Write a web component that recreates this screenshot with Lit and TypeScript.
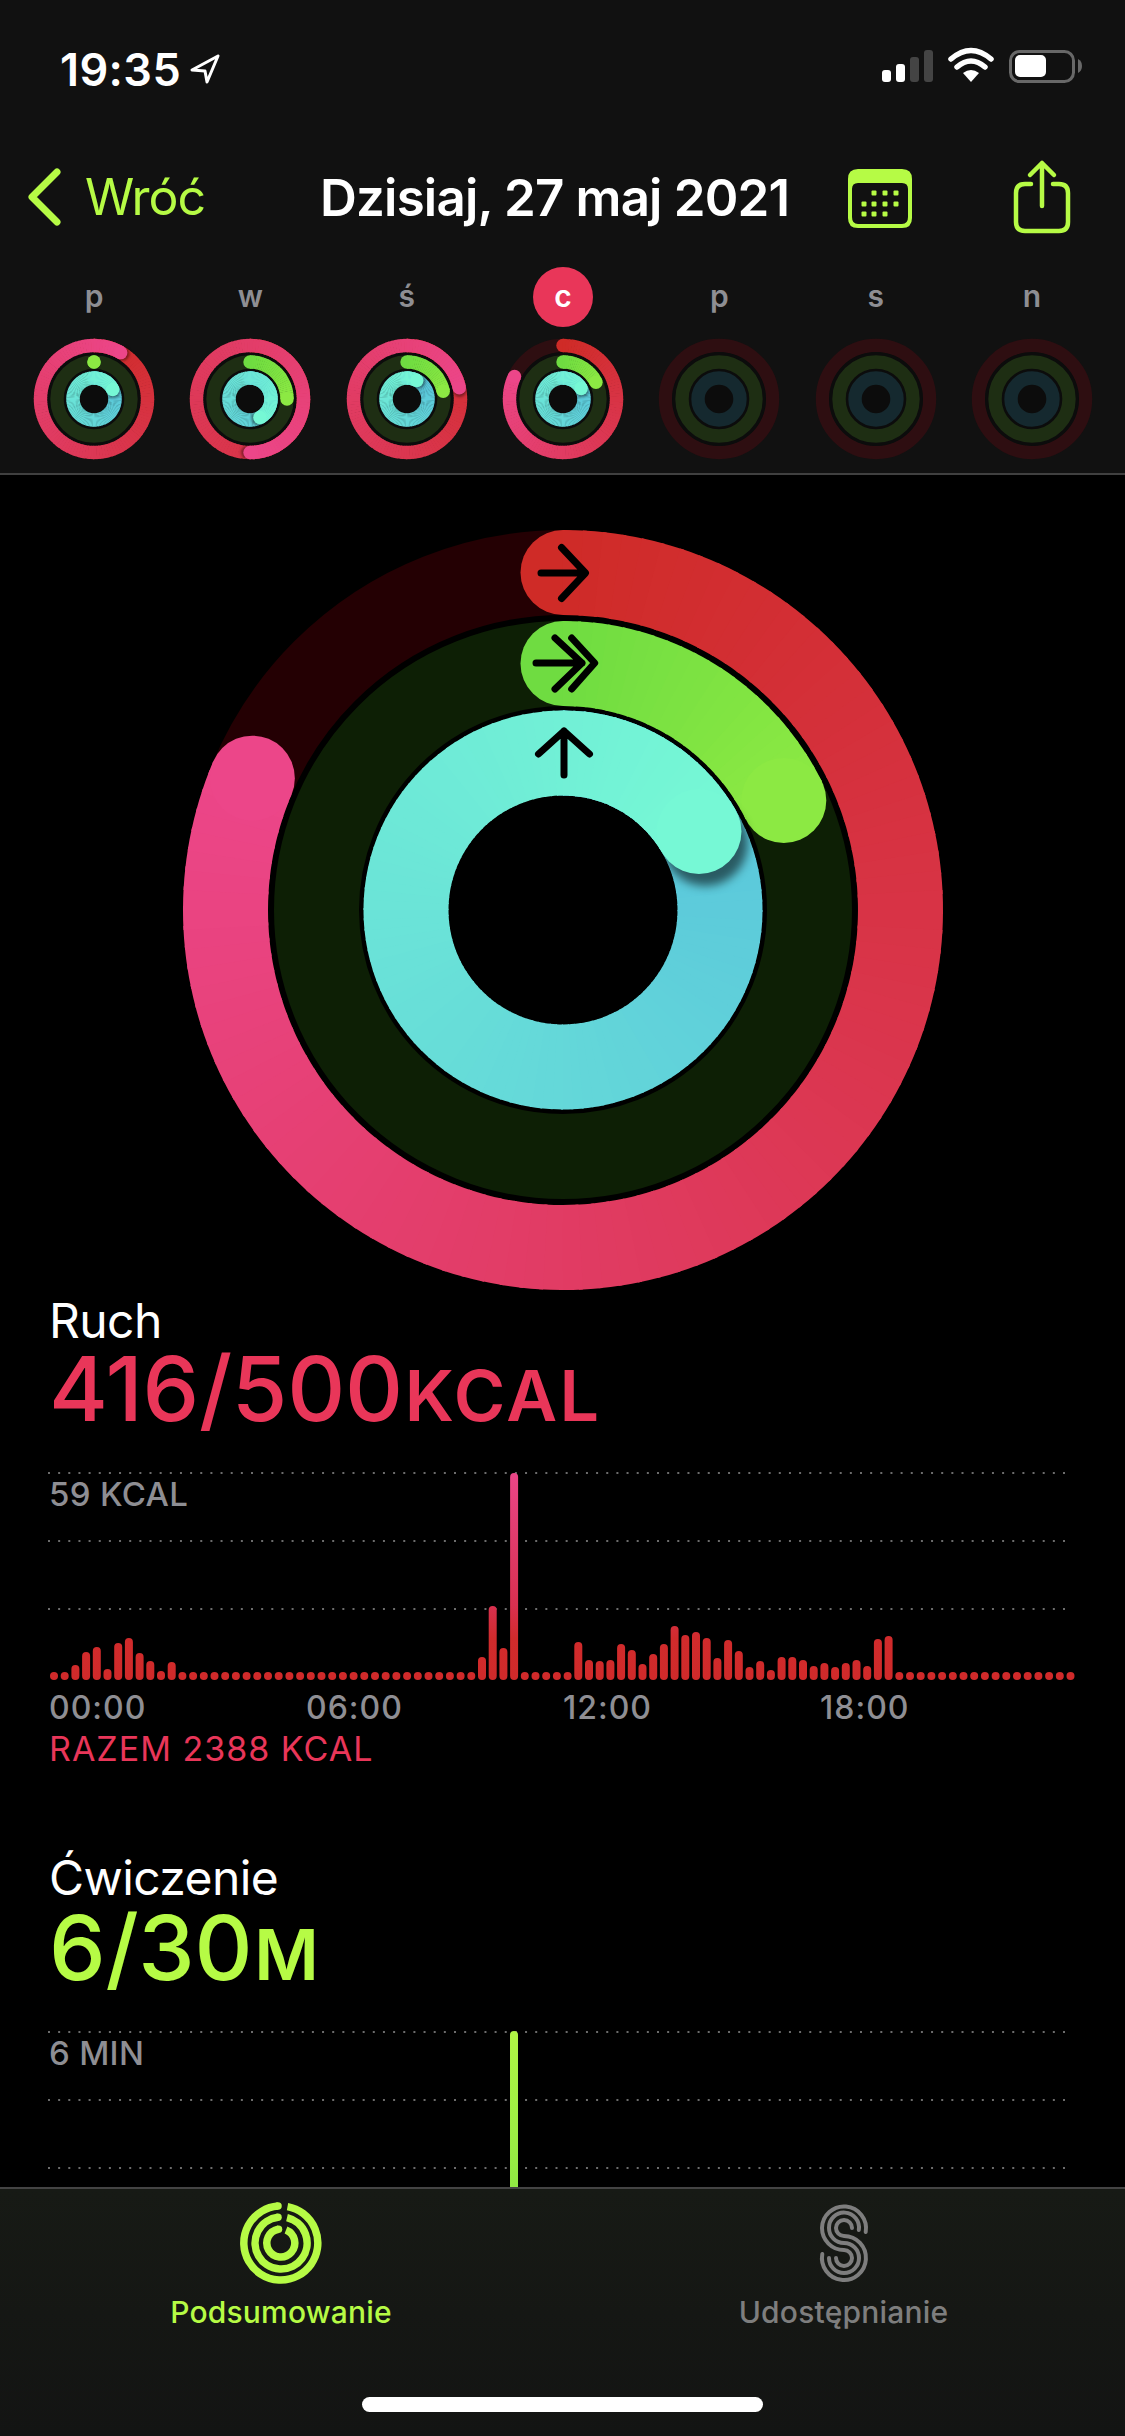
import { LitElement, html, css, svg } from "lit";
import { customElement } from "lit/decorators.js";

type RGB = [number, number, number];
const RED: [RGB, RGB] = [[207, 43, 39], [236, 70, 137]];
const GREEN: [RGB, RGB] = [[111, 220, 65], [140, 233, 67]];
const BLUE: [RGB, RGB] = [[86, 191, 220], [118, 248, 213]];

const mix = (c: [RGB, RGB], t: number) => {
  const k = Math.max(0, Math.min(1, t));
  const v = c[0].map((a, i) => Math.round(a + (c[1][i] - a) * k));
  return `rgb(${v[0]},${v[1]},${v[2]})`;
};

function polar(cx: number, cy: number, r: number, deg: number) {
  const a = (deg * Math.PI) / 180;
  return [cx + r * Math.sin(a), cy - r * Math.cos(a)];
}

function arc(cx: number, cy: number, r: number, w: number, sweep: number, colors: [RGB, RGB], shadowClass: string) {
  const [sx, sy] = polar(cx, cy, r, 0);
  const [ex, ey] = polar(cx, cy, r, sweep);
  const step = 3;
  const parts: unknown[] = [];
  const count = Math.ceil(sweep / step);
  const shadowFrom = Math.max(0, count - 10);
  parts.push(svg`<circle cx=${sx} cy=${sy} r=${w / 2} fill=${mix(colors, 0)}></circle>`);
  for (let i = 0; i < count; i++) {
    if (i === shadowFrom && sweep > 360) {
      const off = ((w * 0.16) / r) * (180 / Math.PI);
      const [hx, hy] = polar(cx, cy, r, sweep + off);
      parts.push(svg`<circle class=${shadowClass} cx=${hx} cy=${hy} r=${w / 2}></circle>`);
    }
    const a0 = i * step;
    const a1 = Math.min(sweep, a0 + step + 0.6);
    const [x0, y0] = polar(cx, cy, r, a0);
    const [x1, y1] = polar(cx, cy, r, a1);
    parts.push(svg`<path d="M${x0} ${y0}A${r} ${r} 0 0 1 ${x1} ${y1}" fill="none" stroke-width=${w} stroke=${mix(colors, (a0 + step / 2) / sweep)}></path>`);
  }
  parts.push(svg`<circle cx=${ex} cy=${ey} r=${w / 2} fill=${mix(colors, 1)}></circle>`);
  return parts;
}

const dots = (n: number) => Array.from({ length: n }, () => 8);
const MOVE_BARS = [
  8, 8, 15, 28, 33, 11, 37, 42, 27, 19, 9, 18, ...dots(28), 23, 74, 32, 207, ...dots(5),
  38, 20, 19, 20, 36, 30, 16, 26, 36, 54, 45, 48, 42, 22, 40, 29, 13, 19, 10, 23, 23, 20, 14, 17, 13, 17, 20, 14, 41, 44,
  ...dots(17),
];

const DAYS = [
  { l: "p", r: 390, g: 0, b: 423 },
  { l: "w", r: 540, g: 90, b: 512 },
  { l: "ś", r: 438, g: 78, b: 388 },
  { l: "c", r: 295, g: 63, b: 420, today: true },
  { l: "p" },
  { l: "s" },
  { l: "n" },
];

function chart(bars: number[] | null, id: string, stops: [number, string][]) {
  const gridYs = [1, 69, 137];
  const xs = (i: number) => 54 + i * 10.7;
  return html`<svg class="plot" width="1125" height="208" viewBox="0 0 1125 208">
    <defs>
      <linearGradient id=${id} gradientUnits="userSpaceOnUse" x1="0" y1="0" x2="0" y2="208">
        ${stops.map(([o, c]) => svg`<stop offset=${o} stop-color=${c}></stop>`)}
      </linearGradient>
    </defs>
    ${gridYs.map(
      (y) => svg`<line x1="48" x2="1072" y1=${y} y2=${y} stroke="#6c6c6c" stroke-width="2" stroke-dasharray="2 8.15"></line>`
    )}
    ${bars
      ? bars.map((h, i) => svg`<rect x=${xs(i) - 4} y=${208 - h} width="8" height=${h} rx="4" fill=${`url(#${id})`}></rect>`)
      : svg`<rect x="510" y="0" width="8" height="208" rx="4" fill=${`url(#${id})`}></rect>`}
  </svg>`;
}

@customElement("app-root")
export class AppRoot extends LitElement {
  static styles = css`
    :host {
      display: flex;
      flex-direction: column;
      width: 1125px;
      height: 2436px;
      overflow: hidden;
      background: #000;
      color: #fff;
      font-family: Inter, "Liberation Sans", sans-serif;
    }
    .head { background: #111; border-bottom: 2px solid #404040; height: 473px; flex: none; }
    .status { height: 138px; display: flex; align-items: center; justify-content: space-between; padding-left: 60px; }
    .clock { display: flex; align-items: center; gap: 8px; font-size: 45px; font-weight: 600; letter-spacing: 0.4px; }
    .status svg { display: block; }
    .nav { height: 118px; display: flex; align-items: center; padding-left: 27px; }
    .back { width: 293px; display: flex; align-items: center; gap: 24px; color: #b6fb45; font-size: 50px; font-weight: 400; letter-spacing: -1px; }
    .title { font-size: 51px; font-weight: 600; letter-spacing: -0.8px; white-space: nowrap; }
    .nav-icons { margin-left: auto; display: flex; }
    .days { display: grid; grid-template-columns: repeat(7, 156.3px); padding: 11px 0 0 16px; }
    .day { display: flex; flex-direction: column; align-items: center; gap: 10px; }
    .letter { width: 60px; height: 60px; border-radius: 50%; display: flex; align-items: center; justify-content: center; font-size: 30px; font-weight: 600; color: #8e8e93; padding-bottom: 2px; box-sizing: border-box; }
    .letter.today { background: #e93659; color: #fff; }
    .day svg { display: block; }
    .shadow-big { fill: rgba(0, 0, 0, 0.55); filter: blur(5px); }
    .shadow-small { fill: rgba(0, 0, 0, 0.45); filter: blur(1.5px); }
    main { flex: 1; min-height: 0; overflow: hidden; }
    .hero { display: block; margin: 50px auto 0; }
    .stat { display: flex; flex-direction: column; }
    .stat.second { margin-top: 86px; }
    .label { padding-left: 49px; font-size: 48px; line-height: 48px; letter-spacing: -0.6px; height: 48px; margin-top: 2px; }
    .second .label { margin-top: 0; }
    .value { padding-left: 49px; font-size: 90px; line-height: 80px; height: 80px; font-weight: 500; letter-spacing: -0.3px; display: flex; align-items: baseline; margin: 4px 0 43px; }
    .second .value { margin-top: 6px; }
    .value small { font-size: 70px; font-weight: 600; letter-spacing: 2.5px; margin-left: 2px; }
    .move { color: #e93659; }
    .exercise { color: #b6fb45; }
    .chart { position: relative; height: 208px; }
    .plot { display: block; }
    .peak { position: absolute; left: 49px; top: 3px; font-size: 33px; line-height: 38px; color: #8e8e93; font-weight: 500; letter-spacing: 0.3px; }
    .times { display: grid; grid-template-columns: repeat(4, 257px); padding: 9px 0 0 49px; font-size: 32px; line-height: 38px; color: #8e8e93; font-weight: 500; letter-spacing: 1px; }
    .total { padding: 3px 0 0 49px; font-size: 34px; line-height: 38px; color: #e93659; letter-spacing: 1px; }
    .tabbar { flex: none; height: 249px; box-sizing: border-box; border-top: 2px solid #444; background: linear-gradient(#171a15, #131413); display: flex; flex-direction: column; padding-top: 9px; }
    .tabs { display: grid; grid-template-columns: 562px 1fr; }
    .tab { display: flex; flex-direction: column; align-items: center; gap: 6px; font-size: 30px; line-height: 36px; font-weight: 500; letter-spacing: 0.2px; color: #7e7e7e; }
    .tab.on { color: #b6fb45; }
    .tab svg { display: block; }
    .indicator { align-self: center; width: 401px; height: 15px; border-radius: 8px; background: #fff; margin-top: 67px; }
  `;

  private smallRing(d: { r?: number; g?: number; b?: number }) {
    const c = 62;
    return html`<svg width="124" height="124" viewBox="0 0 124 124">
      <circle cx=${c} cy=${c} r="53.5" fill="none" stroke="#2e0e11" stroke-width="13.4"></circle>
      <circle cx=${c} cy=${c} r="47" fill="#0c0c0c"></circle>
      <circle cx=${c} cy=${c} r="37" fill="none" stroke="#1e2e13" stroke-width="13.4"></circle>
      <circle cx=${c} cy=${c} r="21" fill="none" stroke="#15292f" stroke-width="13.4"></circle>
      ${d.r !== undefined ? arc(c, c, 53.5, 13.4, d.r, RED, "shadow-small") : ""}
      ${d.g !== undefined ? arc(c, c, 37, 13.4, d.g, GREEN, "shadow-small") : ""}
      ${d.b !== undefined ? arc(c, c, 21, 13.4, d.b, BLUE, "shadow-small") : ""}
    </svg>`;
  }

  private heroRings() {
    const c = 385;
    return html`<svg class="hero" width="770" height="770" viewBox="0 0 770 770">
      <circle cx=${c} cy=${c} r="337.5" fill="none" stroke="#240003" stroke-width="85"></circle>
      <circle cx=${c} cy=${c} r="246.5" fill="none" stroke="#0d1f05" stroke-width="85"></circle>
      ${arc(c, c, 337.5, 85, 293, RED, "shadow-big")}
      ${arc(c, c, 246.5, 85, 63.6, GREEN, "shadow-big")}
      ${arc(c, c, 157, 85, 420, BLUE, "shadow-big")}
      <g transform="translate(-177 -525)" fill="none" stroke="#000" stroke-width="7" stroke-linecap="round" stroke-linejoin="round">
        <path d="M540 573H584M560.5 547.5L584.5 573L560.5 598.5"></path>
        <path d="M535 663H581M554 638L581 663L554 689M570.7 638L593.7 663L570.7 689"></path>
        <path d="M563 775V731M537.5 754L563 731L588.5 754"></path>
      </g>
    </svg>`;
  }

  render() {
    const lime = "#b6fb45";
    return html`
      <div class="head">
        <div class="status">
          <div class="clock">
            <span>19:35</span>
            <svg width="32" height="32" viewBox="0 0 32 32"><path d="M29 3L3 17L16 18L18 29Z" fill="none" stroke="#fff" stroke-width="3" stroke-linejoin="round"></path></svg>
          </div>
          <svg width="245" height="44" viewBox="880 50 245 44">
            <rect x="882" y="73" width="9" height="12" rx="3" fill="#fff"></rect>
            <rect x="896" y="67" width="9" height="18" rx="3" fill="#fff"></rect>
            <rect x="910" y="60" width="9" height="25" rx="3" fill="#444"></rect>
            <rect x="924" y="53" width="9" height="32" rx="3" fill="#444"></rect>
            <path d="M971 85L963 76Q971 70 979 76Z" fill="#fff"></path>
            <path d="M957 70Q971 58 985 70" fill="none" stroke="#fff" stroke-width="5.5" stroke-linecap="round"></path>
            <path d="M951 62Q971 45 991 62" fill="none" stroke="#fff" stroke-width="5.5" stroke-linecap="round"></path>
            <rect x="1010.5" y="54.5" width="63" height="30" rx="9" fill="none" stroke="#686868" stroke-width="3"></rect>
            <rect x="1015" y="58" width="31" height="22" rx="5" fill="#fff"></rect>
            <path d="M1078 62Q1082 64 1082 69Q1082 74 1078 76Z" fill="#686868"></path>
          </svg>
        </div>
        <div class="nav">
          <div class="back">
            <svg width="34" height="58" viewBox="0 0 34 58"><path d="M30 4L5 29L30 54" fill="none" stroke=${lime} stroke-width="7" stroke-linecap="round" stroke-linejoin="round"></path></svg>
            <span>Wróć</span>
          </div>
          <div class="title">Dzisiaj, 27 maj 2021</div>
          <div class="nav-icons">
            <svg width="295" height="80" viewBox="830 156 295 80">
              <path fill-rule="evenodd" fill=${lime} d="M858 168H902Q912 168 912 178V217Q912 227 902 227H858Q848 227 848 217V178Q848 168 858 168ZM858 182Q852 182 852 188V216Q852 223 858 223H902Q908 223 908 216V188Q908 182 902 182Z"></path>
              ${[
                [874, 192], [885, 192], [896, 192],
                [864, 203], [874, 203], [885, 203], [896, 203],
                [864, 213], [874, 213], [885, 213],
              ].map(([x, y]) => svg`<rect x=${x - 2.5} y=${y - 2.5} width="5" height="5" rx="1" fill=${lime}></rect>`)}
              <g fill="none" stroke=${lime} stroke-width="4.5" stroke-linecap="round" stroke-linejoin="round">
                <path d="M1031 183H1025Q1016 183 1016 192V221Q1016 230 1025 230H1059Q1068 230 1068 221V192Q1068 183 1059 183H1053"></path>
                <path d="M1042 205V162M1030 174L1042 162L1054 174"></path>
              </g>
            </svg>
          </div>
        </div>
        <div class="days">
          ${DAYS.map(
            (d) => html`<div class="day">
              <div class="letter ${d.today ? "today" : ""}">${d.l}</div>
              ${this.smallRing(d)}
            </div>`
          )}
        </div>
      </div>
      <main>
        ${this.heroRings()}
        <section class="stat">
          <div class="label">Ruch</div>
          <div class="value move">416/500<small>KCAL</small></div>
          <div class="chart">
            ${chart(MOVE_BARS, "mv", [[0, "#ea4688"], [0.64, "#d93050"], [0.8, "#d12b2c"], [1, "#d02a2a"]])}
            <div class="peak">59 KCAL</div>
          </div>
          <div class="times"><span>00:00</span><span>06:00</span><span>12:00</span><span>18:00</span></div>
          <div class="total">RAZEM 2388 KCAL</div>
        </section>
        <section class="stat second">
          <div class="label">Ćwiczenie</div>
          <div class="value exercise">6/30<small>M</small></div>
          <div class="chart">
            ${chart(null, "ex", [[0, "#b0f545"], [0.55, "#9aee44"], [1, "#84e042"]])}
            <div class="peak">6 MIN</div>
          </div>
        </section>
      </main>
      <footer class="tabbar">
        <div class="tabs">
          <div class="tab on">
            <svg width="90" height="90" viewBox="0 0 90 90" fill="none" stroke=${lime} stroke-width="7.5">
              <path d="M51.5 8.6A37 37 0 1 1 42 8.1"></path>
              <path d="M51 19.7A26 26 0 1 1 42 19.2"></path>
              <path d="M50 32A14 14 0 1 1 42.5 31.2"></path>
              <circle cx="42" cy="8.1" r="3.75" fill=${lime} stroke="none"></circle>
              <circle cx="42" cy="19.2" r="3.75" fill=${lime} stroke="none"></circle>
              <circle cx="42.5" cy="31.2" r="3.75" fill=${lime} stroke="none"></circle>
            </svg>
            <span>Podsumowanie</span>
          </div>
          <div class="tab">
            <svg width="90" height="90" viewBox="9 9 90 90" fill="none" stroke="#7e7e7e" stroke-width="4" stroke-linecap="round">
              <path d="M75.7 43A22 22 0 1 0 32 39A22 22 0 0 0 54 61A8 8 0 1 1 46 69"></path>
              <path d="M68.8 41A15 15 0 1 0 39 39A15 15 0 0 0 54 54A15 15 0 1 1 39 69"></path>
              <path d="M62 39A8 8 0 1 0 46 39A8 8 0 0 0 54 47A22 22 0 1 1 32.3 65"></path>
            </svg>
            <span>Udostępnianie</span>
          </div>
        </div>
        <div class="indicator"></div>
      </footer>
    `;
  }
}
